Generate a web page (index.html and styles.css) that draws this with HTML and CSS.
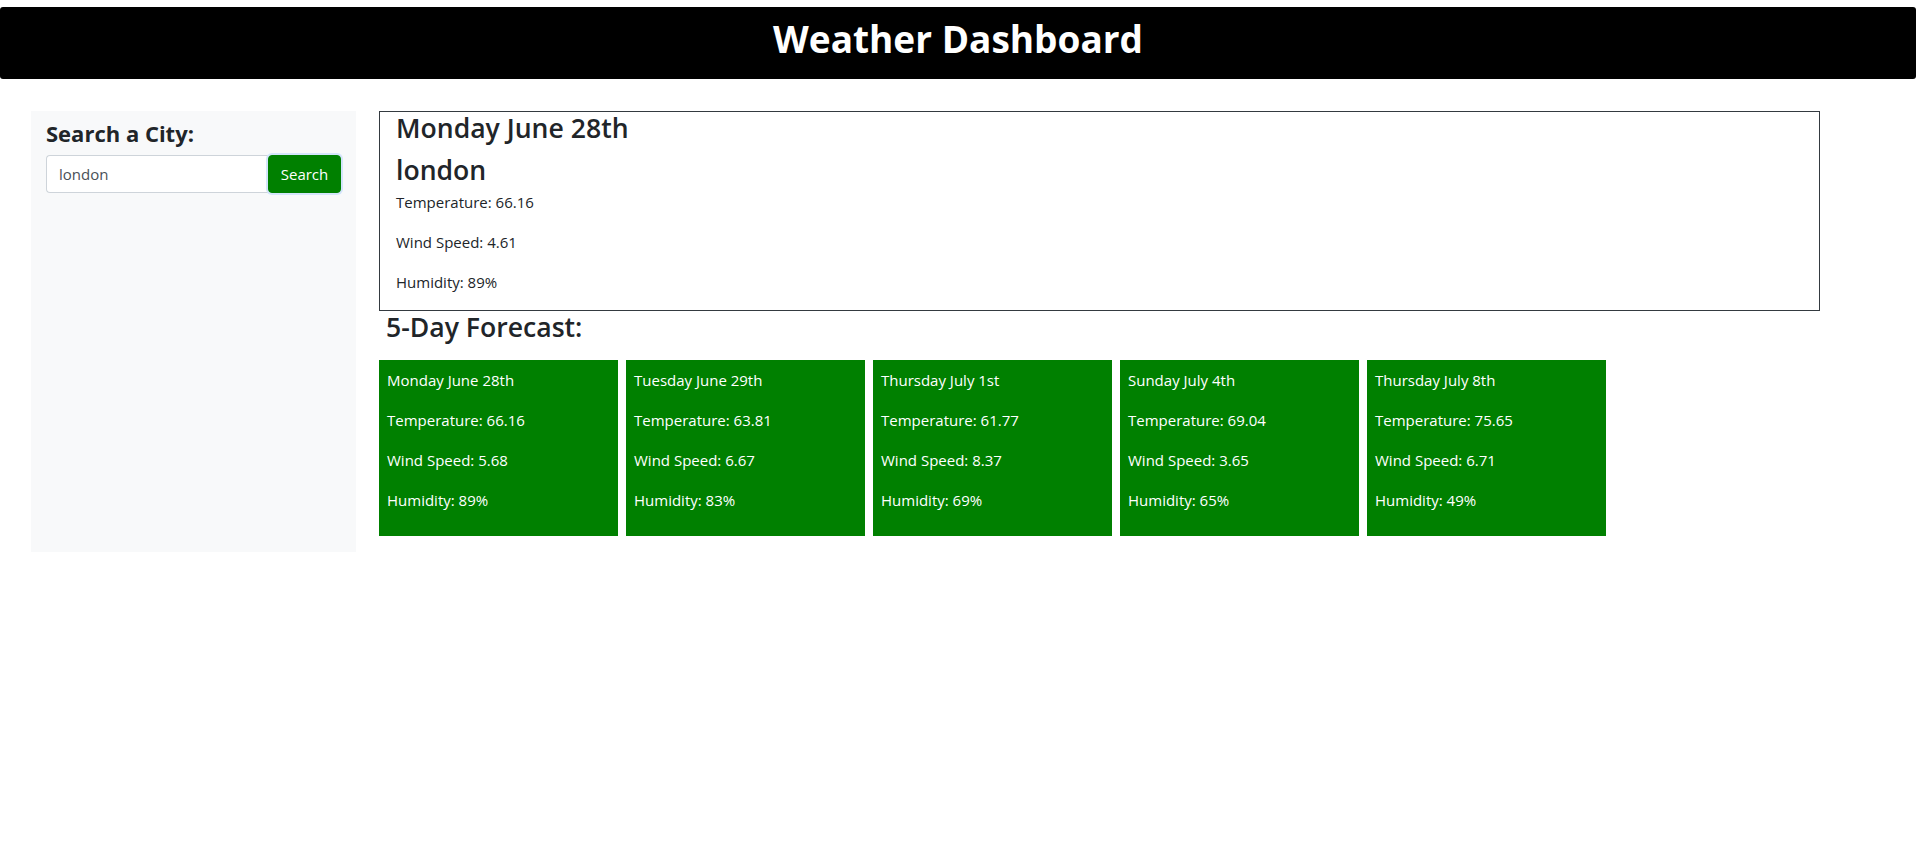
FILE: index.html
```html
<!DOCTYPE html>
<html lang="en">
<head>
<meta charset="utf-8">
<title>Weather Dashboard</title>
<link rel="stylesheet" href="styles.css">
</head>
<body>
<header class="topbar">
  <h1 class="title">Weather Dashboard</h1>
</header>
<div class="layout">
  <aside class="sidebar">
    <h4 class="search-title">Search a City:</h4>
    <div class="input-group">
      <input class="city-input" type="text" value="london">
      <button class="search-btn" type="button">Search</button>
    </div>
  </aside>
  <main class="content">
    <section class="current">
      <h3 class="current-date">Monday June 28th</h3>
      <h3 class="current-city">london</h3>
      <p class="stat">Temperature: 66.16</p>
      <p class="stat">Wind Speed: 4.61</p>
      <p class="stat">Humidity: 89%</p>
    </section>
    <h3 class="forecast-title">5-Day Forecast:</h3>
    <div class="forecast">
      <div class="card">
        <p class="stat">Monday June 28th</p>
        <p class="stat">Temperature: 66.16</p>
        <p class="stat">Wind Speed: 5.68</p>
        <p class="stat">Humidity: 89%</p>
      </div>
      <div class="card">
        <p class="stat">Tuesday June 29th</p>
        <p class="stat">Temperature: 63.81</p>
        <p class="stat">Wind Speed: 6.67</p>
        <p class="stat">Humidity: 83%</p>
      </div>
      <div class="card">
        <p class="stat">Thursday July 1st</p>
        <p class="stat">Temperature: 61.77</p>
        <p class="stat">Wind Speed: 8.37</p>
        <p class="stat">Humidity: 69%</p>
      </div>
      <div class="card">
        <p class="stat">Sunday July 4th</p>
        <p class="stat">Temperature: 69.04</p>
        <p class="stat">Wind Speed: 3.65</p>
        <p class="stat">Humidity: 65%</p>
      </div>
      <div class="card">
        <p class="stat">Thursday July 8th</p>
        <p class="stat">Temperature: 75.65</p>
        <p class="stat">Wind Speed: 6.71</p>
        <p class="stat">Humidity: 49%</p>
      </div>
    </div>
  </main>
</div>
</body>
</html>
```
FILE: styles.css
```css
* { box-sizing: border-box; }

body {
  margin: 0;
  font-family: "Open Sans", "Noto Sans", sans-serif;
  font-size: 16px;
  line-height: 1.5;
  color: #212529;
  background: #fff;
}

.topbar {
  margin-top: 7px;
  height: 72px;
  background: #000;
  border-radius: 3px;
  padding: 8px 0 0;
  text-align: center;
}

.title {
  margin: 0;
  font-size: 37px;
  line-height: 48px;
  font-weight: 700;
  color: #fff;
}

.layout {
  display: flex;
  align-items: flex-start;
  margin-top: 32px;
  padding-left: 31px;
  gap: 23px;
}

.sidebar {
  width: 325px;
  min-height: 441px;
  background: #f8f9fa;
  padding: 8px 15px 15px;
}

.search-title {
  margin: 0 0 7px;
  font-size: 22px;
  line-height: 28.8px;
  font-weight: 700;
}

.input-group {
  display: flex;
  height: 38px;
}

.city-input {
  flex: 1;
  min-width: 0;
  height: 38px;
  border: 1px solid #ced4da;
  border-right: none;
  border-radius: 4px 0 0 4px;
  padding: 6px 12px;
  font-family: inherit;
  font-size: 15px;
  color: #495057;
  background: #fff;
  outline: none;
}

.search-btn {
  width: 73px;
  height: 38px;
  border: 1px solid #008000;
  border-radius: 4px;
  background: #008000;
  color: #fff;
  font-family: inherit;
  font-size: 15px;
  padding: 0;
  box-shadow: 0 0 0 2px #d4e5fb;
  position: relative;
  z-index: 1;
}

.content {
  width: 1441px;
}

.current {
  border: 1px solid #343a40;
  padding: 0 16px;
}

.current-date,
.current-city,
.forecast-title {
  font-size: 26.6px;
  line-height: 33.6px;
  font-weight: 600;
  margin: 0 0 8px;
}

.current-city {
  margin-bottom: 3px;
}

.stat {
  margin: 0 0 16px;
  font-size: 15px;
  line-height: 24px;
}

.forecast-title {
  margin: 0 0 15px 7px;
}

.forecast {
  display: flex;
  gap: 8px;
}

.card {
  width: 239px;
  background: #008000;
  color: #fff;
  padding: 8px 8px 8px;
}
```
